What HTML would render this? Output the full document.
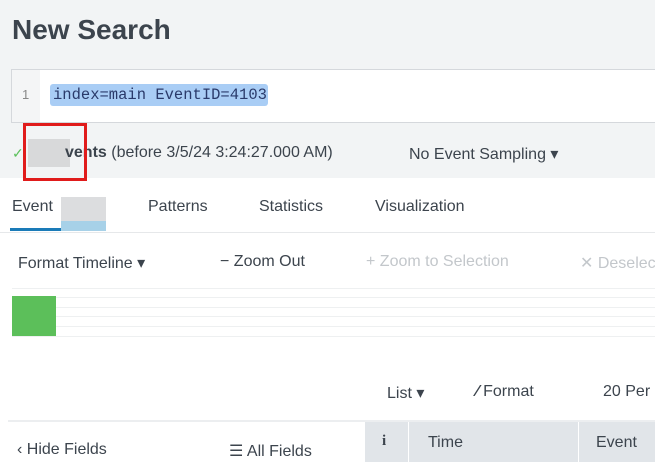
<!DOCTYPE html>
<html><head><style>
body{margin:0;width:655px;height:472px;overflow:hidden;background:#fff;font-family:"Liberation Sans",sans-serif;position:relative;color:#3c444d}
.a{position:absolute;white-space:nowrap}
</style></head><body>
<div class="a" style="left:0;top:0;width:655px;height:178px;background:#f2f4f5"></div>
<div class="a" style="left:12px;top:14px;font-size:28px;font-weight:bold;color:#3c444d">New Search</div>
<div class="a" style="left:11px;top:69px;width:650px;height:52px;background:#fff;border:1px solid #d5d8dc"></div>
<div class="a" style="left:12px;top:70px;width:28px;height:52px;background:#f4f5f6"></div>
<div class="a" style="left:22px;top:87px;font-size:13px;color:#888">1</div>
<div class="a" style="left:50px;top:84px;height:22px;width:218px;background:#a9cdf5;border-radius:3px"></div>
<div class="a" style="left:53px;top:86px;font-family:'Liberation Mono',monospace;font-size:15.5px;color:#2a3a6a">index=main EventID=4103</div>
<div class="a" style="left:12px;top:145px;font-size:14px;color:#5cc05c">✓</div>
<div class="a" style="left:28px;top:139px;width:42px;height:28px;background:#d8d9da"></div>
<div class="a" style="left:65px;top:144px;font-size:16px;color:#3c444d"><b>vents</b> (before 3/5/24 3:24:27.000 AM)</div>
<div class="a" style="left:409px;top:144px;font-size:16px">No Event Sampling ▾</div>
<div class="a" style="left:23px;top:123px;width:64px;height:58px;border:3px solid #e01b1b;box-sizing:border-box"></div>
<div class="a" style="left:12px;top:198px;font-size:16px">Event</div>
<div class="a" style="left:61px;top:197px;width:45px;height:24px;background:#dcdddf"></div>
<div class="a" style="left:61px;top:221px;width:45px;height:10px;background:#a7d1e8"></div>
<div class="a" style="left:10px;top:228px;width:51px;height:3px;background:#1a7bb8"></div>
<div class="a" style="left:0;top:232px;width:655px;height:1px;background:#e6e8ea"></div>
<div class="a" style="left:148px;top:198px;font-size:16px">Patterns</div>
<div class="a" style="left:259px;top:198px;font-size:16px">Statistics</div>
<div class="a" style="left:375px;top:198px;font-size:16px">Visualization</div>
<div class="a" style="left:18px;top:253px;font-size:16px">Format Timeline ▾</div>
<div class="a" style="left:220px;top:253px;font-size:16px">− Zoom Out</div>
<div class="a" style="left:366px;top:253px;font-size:16px;color:#c3c7cb">+ Zoom to Selection</div>
<div class="a" style="left:580px;top:253px;font-size:16px;color:#c3c7cb">✕ Deselect</div>
<div class="a" style="left:12px;top:288px;width:645px;height:1px;background:#eef0f1"></div>
<div class="a" style="left:12px;top:297px;width:645px;height:1px;background:#eef0f1"></div>
<div class="a" style="left:12px;top:307px;width:645px;height:1px;background:#eef0f1"></div>
<div class="a" style="left:12px;top:316px;width:645px;height:1px;background:#eef0f1"></div>
<div class="a" style="left:12px;top:326px;width:645px;height:1px;background:#eef0f1"></div>
<div class="a" style="left:12px;top:336px;width:645px;height:1px;background:#eef0f1"></div>
<div class="a" style="left:12px;top:296px;width:44px;height:40px;background:#5cbf5a"></div>
<div class="a" style="left:387px;top:383px;font-size:16px">List ▾</div>
<div class="a" style="left:476px;top:383px;font-size:16px"><b>⁄</b> Format</div>
<div class="a" style="left:603px;top:383px;font-size:16px">20 Per</div>
<div class="a" style="left:8px;top:420px;width:650px;height:2px;background:#eceef0"></div>
<div class="a" style="left:365px;top:422px;width:290px;height:40px;background:#e1e5e9"></div>
<div class="a" style="left:408px;top:422px;width:1px;height:40px;background:#fff"></div>
<div class="a" style="left:578px;top:422px;width:1px;height:40px;background:#fff"></div>
<div class="a" style="left:382px;top:433px;font-size:15px;font-family:'Liberation Serif',serif;font-weight:bold">i</div>
<div class="a" style="left:428px;top:434px;font-size:16px">Time</div>
<div class="a" style="left:596px;top:434px;font-size:16px">Event</div>
<div class="a" style="left:17px;top:441px;font-size:16px">‹ Hide Fields</div>
<div class="a" style="left:229px;top:441px;font-size:16px">☰ All Fields</div>
</body></html>
